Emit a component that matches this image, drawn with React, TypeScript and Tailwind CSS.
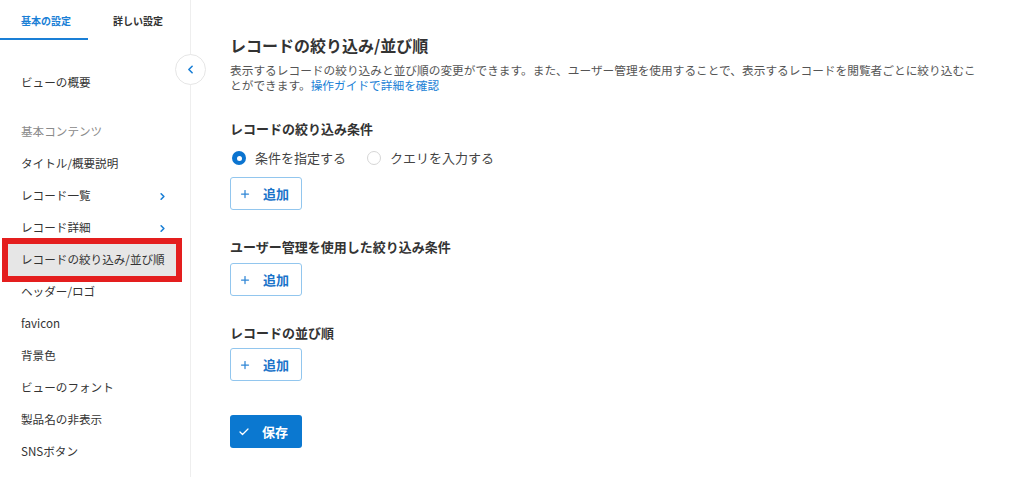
import React, { useState } from "react";
import { ChevronLeft, ChevronRight, Plus, Check } from "lucide-react";

const font = { fontFamily: '"Noto Sans CJK JP", "Noto Sans", sans-serif' };

const navItems = [
  { label: "タイトル/概要説明" },
  { label: "レコード一覧", more: true },
  { label: "レコード詳細", more: true },
  { label: "レコードの絞り込み/並び順", active: true },
  { label: "ヘッダー/ロゴ" },
  { label: "favicon" },
  { label: "背景色" },
  { label: "ビューのフォント" },
  { label: "製品名の非表示" },
  { label: "SNSボタン" },
];

const AddButton = () => (
  <button className="flex h-[33px] w-[72px] items-center rounded-[3px] border border-[#92c6ee] bg-white pl-[8px] text-[13px] font-bold text-[#1a73c9]">
    <Plus size={12} strokeWidth={2.5} className="mr-[12px] text-[#2f86d6]" />
    追加
  </button>
);

const Radio = ({ checked, label, onClick }) => (
  <button className="flex items-center" onClick={onClick}>
    {checked ? (
      <span className="flex h-[14px] w-[14px] items-center justify-center rounded-full bg-[#0b74d0]">
        <span className="h-[5px] w-[5px] rounded-full bg-white" />
      </span>
    ) : (
      <span className="h-[14px] w-[14px] rounded-full border border-[#d6d6d6] bg-white" />
    )}
    <span className="ml-[9px] text-[13px] text-[#444]">{label}</span>
  </button>
);

export default function App() {
  const [mode, setMode] = useState("cond");

  return (
    <div className="flex h-[477px] w-full bg-white text-[#333]" style={font}>
      <aside className="relative w-[191px] shrink-0 border-r border-[#eeeeee]">
        <div className="flex h-10">
          <div className="flex w-[88px] items-center justify-center border-b-2 border-[#1a7fd6] pt-[2px] pl-[4px] text-[10px] font-bold text-[#1a7fd6]">
            基本の設定
          </div>
          <div className="flex w-[100px] items-center justify-center text-[10px] font-bold text-[#333]">
            詳しい設定
          </div>
        </div>

        <button className="absolute -right-[16px] top-[54px] flex h-[31px] w-[31px] items-center justify-center rounded-full border border-[#e6e6e6] bg-white">
          <ChevronLeft size={13} strokeWidth={3} className="text-[#1a7fd6]" />
        </button>

        <div className="pl-2 pr-[14px] pt-[27px]">
          <div className="flex h-8 items-center pl-[13px] text-[11.6px]">ビューの概要</div>
          <div className="mt-[17px] flex h-8 items-center pl-[13px] text-[11.6px] text-[#8a8a8a]">
            基本コンテンツ
          </div>
          {navItems.map((item) => (
            <div
              key={item.label}
              className={
                item.active
                  ? "flex h-8 items-center justify-between bg-[#e6e6e6] pl-[13px] pr-[8px] text-[11.6px] outline-[6px] outline-solid outline-[#e41e1e]"
                  : "flex h-8 items-center justify-between pl-[13px] pr-[8px] text-[11.6px]"
              }
            >
              <span>{item.label}</span>
              {item.more && <ChevronRight size={11} strokeWidth={3.5} className="text-[#1a7fd6]" />}
            </div>
          ))}
        </div>
      </aside>

      <main className="flex-1 pl-[39px] pt-[33px]">
        <h1 className="text-[16px] font-bold leading-6 text-[#333]">レコードの絞り込み/並び順</h1>
        <p className="mt-[5px] w-[748px] text-[11.7px] leading-[15px] text-[#555]">
          表示するレコードの絞り込みと並び順の変更ができます。また、ユーザー管理を使用することで、表示するレコードを閲覧者ごとに絞り込むことができます。
          <a className="text-[#1a7fd6]">操作ガイドで詳細を確認</a>
        </p>

        <h2 className="mt-[27px] text-[13px] font-bold leading-5">レコードの絞り込み条件</h2>
        <div className="mt-[9px] flex h-5 items-center gap-[21px] pl-[2px]">
          <Radio checked={mode === "cond"} label="条件を指定する" onClick={() => setMode("cond")} />
          <Radio checked={mode === "query"} label="クエリを入力する" onClick={() => setMode("query")} />
        </div>
        <div className="mt-[9px]">
          <AddButton />
        </div>

        <h2 className="mt-[27px] text-[13px] font-bold leading-5">ユーザー管理を使用した絞り込み条件</h2>
        <div className="mt-[6px]">
          <AddButton />
        </div>

        <h2 className="mt-[27px] text-[13px] font-bold leading-5">レコードの並び順</h2>
        <div className="mt-[5px]">
          <AddButton />
        </div>

        <button className="mt-[34px] flex h-[33px] w-[72px] items-center rounded-[3px] bg-[#0b78d0] pl-[8px] text-[13px] font-bold text-white">
          <Check size={12} strokeWidth={2.5} className="mr-[12px]" />
          保存
        </button>
      </main>
    </div>
  );
}
